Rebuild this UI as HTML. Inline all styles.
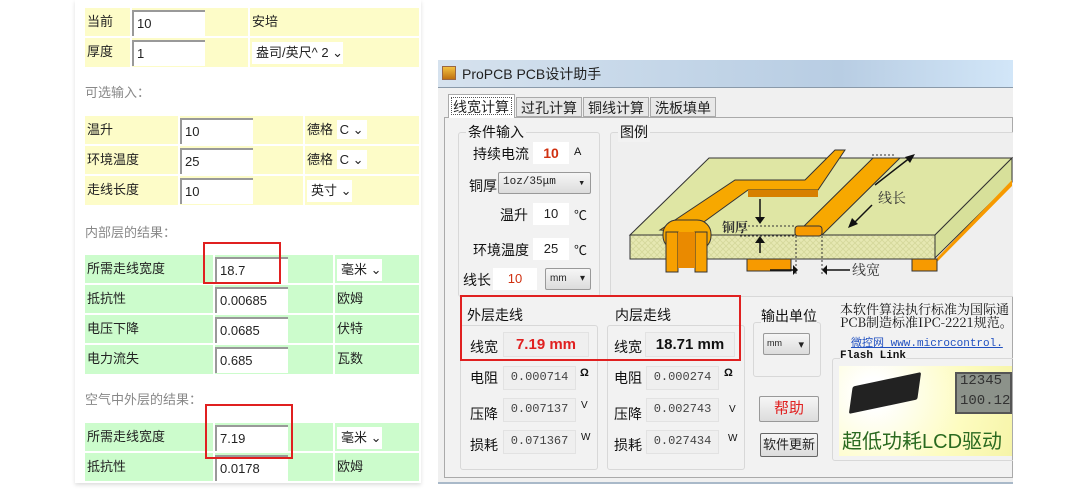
<!DOCTYPE html>
<html><head><meta charset="utf-8">
<style>
*{margin:0;padding:0;box-sizing:border-box}
body{width:1080px;height:501px;background:#fff;position:relative;overflow:hidden;font-family:"Liberation Sans","Noto Sans CJK SC",sans-serif;font-size:13px;color:#222}
.a{position:absolute}
.y{background:#fdfcc8}
.g{background:#ccfccc}
.cell{position:absolute;line-height:28px;padding-left:2px;font-size:13px}
.inp{position:absolute;background:#fff;border-top:2px solid #999;border-left:2px solid #999;padding-left:3px;line-height:24px;font-size:13px}
.sel{position:absolute;background:#fff;padding-left:4px;line-height:22px;font-size:13px}
.lbl{position:absolute;color:#888;font-size:13px}
.red{position:absolute;border:2px solid #e02020}
.w{position:absolute;font-size:13px;color:#111;white-space:nowrap}
.box{position:absolute;background:#efefef;border:1px solid #e2e2e2}
.mono{font-family:"Liberation Mono","Noto Sans CJK SC",monospace;font-size:12px;color:#444}
.btn{position:absolute;border:1px solid #999;background:linear-gradient(#f6f6f6,#dcdcdc);border-radius:2px;text-align:center;white-space:nowrap}
.grp{position:absolute;border:1px solid #d8d8d8;border-radius:3px}
</style></head><body>
<!-- left panel -->
<div class="a" style="left:75px;top:0;width:346px;height:483px;background:#fff;box-shadow:0 2px 4px #ddd"></div>
<div class="a y" style="left:85px;top:8px;width:334px;height:59px"></div>
<div class="a" style="left:85px;top:36px;width:334px;height:2px;background:#fff"></div>
<div class="a" style="left:130px;top:8px;width:2px;height:59px;background:#fff"></div>
<div class="a" style="left:248px;top:8px;width:2px;height:59px;background:#fff"></div>
<div class="cell" style="left:85px;top:8px">当前</div>
<div class="cell" style="left:85px;top:38px">厚度</div>
<div class="inp" style="left:132px;top:10px;width:73px">10</div>
<div class="inp" style="left:132px;top:40px;width:73px">1</div>
<div class="cell" style="left:250px;top:8px">安培</div>
<div class="sel" style="left:252px;top:42px">盎司/英尺^ 2 ⌄</div>
<div class="lbl" style="left:85px;top:82px">可选输入：</div>

<div class="a y" style="left:85px;top:116px;width:334px;height:89px"></div>
<div class="a" style="left:85px;top:144px;width:334px;height:2px;background:#fff"></div>
<div class="a" style="left:85px;top:174px;width:334px;height:2px;background:#fff"></div>
<div class="a" style="left:178px;top:116px;width:2px;height:89px;background:#fff"></div>
<div class="a" style="left:303px;top:116px;width:2px;height:89px;background:#fff"></div>
<div class="cell" style="left:85px;top:116px">温升</div>
<div class="cell" style="left:85px;top:146px">环境温度</div>
<div class="cell" style="left:85px;top:176px">走线长度</div>
<div class="inp" style="left:180px;top:118px;width:73px">10</div>
<div class="inp" style="left:180px;top:148px;width:73px">25</div>
<div class="inp" style="left:180px;top:178px;width:73px">10</div>
<div class="cell" style="left:305px;top:116px">德格 <span style="background:#fff;padding:2px 3px">C ⌄</span></div>
<div class="cell" style="left:305px;top:146px">德格 <span style="background:#fff;padding:2px 3px">C ⌄</span></div>
<div class="sel" style="left:307px;top:180px">英寸 ⌄</div>
<div class="lbl" style="left:85px;top:222px">内部层的结果：</div>

<div class="a g" style="left:85px;top:255px;width:334px;height:119px"></div>
<div class="a" style="left:85px;top:283px;width:334px;height:2px;background:#fff"></div>
<div class="a" style="left:85px;top:313px;width:334px;height:2px;background:#fff"></div>
<div class="a" style="left:85px;top:343px;width:334px;height:2px;background:#fff"></div>
<div class="a" style="left:213px;top:255px;width:2px;height:119px;background:#fff"></div>
<div class="a" style="left:333px;top:255px;width:2px;height:119px;background:#fff"></div>
<div class="cell" style="left:85px;top:255px">所需走线宽度</div>
<div class="cell" style="left:85px;top:285px">抵抗性</div>
<div class="cell" style="left:85px;top:315px">电压下降</div>
<div class="cell" style="left:85px;top:345px">电力流失</div>
<div class="inp" style="left:215px;top:257px;width:73px">18.7</div>
<div class="inp" style="left:215px;top:287px;width:73px">0.00685</div>
<div class="inp" style="left:215px;top:317px;width:73px">0.0685</div>
<div class="inp" style="left:215px;top:347px;width:73px">0.685</div>
<div class="sel" style="left:337px;top:259px">毫米 ⌄</div>
<div class="cell" style="left:335px;top:285px">欧姆</div>
<div class="cell" style="left:335px;top:315px">伏特</div>
<div class="cell" style="left:335px;top:345px">瓦数</div>
<div class="red" style="left:203px;top:242px;width:78px;height:42px"></div>
<div class="lbl" style="left:85px;top:389px">空气中外层的结果：</div>

<div class="a g" style="left:85px;top:423px;width:334px;height:58px"></div>
<div class="a" style="left:85px;top:451px;width:334px;height:2px;background:#fff"></div>
<div class="a" style="left:213px;top:423px;width:2px;height:58px;background:#fff"></div>
<div class="a" style="left:333px;top:423px;width:2px;height:58px;background:#fff"></div>
<div class="cell" style="left:85px;top:423px">所需走线宽度</div>
<div class="cell" style="left:85px;top:453px">抵抗性</div>
<div class="inp" style="left:215px;top:425px;width:73px">7.19</div>
<div class="inp" style="left:215px;top:455px;width:73px">0.0178</div>
<div class="sel" style="left:337px;top:427px">毫米 ⌄</div>
<div class="cell" style="left:335px;top:453px">欧姆</div>
<div class="red" style="left:205px;top:404px;width:88px;height:55px"></div>

<!-- window -->
<div class="a" style="left:438px;top:60px;width:575px;height:424px;background:#f0f0f0;border-bottom:2px solid #a9b9c9"></div>
<div class="a" style="left:438px;top:60px;width:575px;height:28px;background:linear-gradient(90deg,#d6e2ee,#c4d6e8 40%,#b8cde3 70%,#d2e6f8);border-bottom:1px solid #8a9aaa"></div>
<div class="a" style="left:442px;top:66px;width:14px;height:14px;background:linear-gradient(#f2c040,#c07010);border:1px solid #964"></div>
<div class="w" style="left:462px;top:64px;font-size:14px;color:#222">ProPCB PCB设计助手</div>
<div class="a" style="left:444px;top:117px;width:569px;height:361px;border:1px solid #aaa;background:#f2f2f2"></div>
<div class="a" style="left:448px;top:94px;width:67px;height:24px;background:#fff;border:1px solid #aaa;border-bottom:none;font-size:14px;padding:2px 4px;outline:1px dotted #555;outline-offset:-4px">线宽计算</div>
<div class="a" style="left:516px;top:97px;width:66px;height:20px;background:#e8e8e8;border:1px solid #aaa;font-size:14px;padding:0 4px">过孔计算</div>
<div class="a" style="left:583px;top:97px;width:66px;height:20px;background:#e8e8e8;border:1px solid #aaa;font-size:14px;padding:0 4px">铜线计算</div>
<div class="a" style="left:650px;top:97px;width:66px;height:20px;background:#e8e8e8;border:1px solid #aaa;font-size:14px;padding:0 4px">洗板填单</div>

<div class="grp" style="left:458px;top:132px;width:142px;height:165px"></div>
<div class="w" style="left:466px;top:122px;background:#f2f2f2;padding:0 2px;font-size:14px">条件输入</div>
<div class="grp" style="left:610px;top:132px;width:410px;height:165px;background:#efefef"></div>
<div class="w" style="left:618px;top:122px;background:#f2f2f2;padding:0 2px;font-size:14px">图例</div>
<div class="w" style="left:473px;top:144px;font-size:14px">持续电流</div>
<div class="a" style="left:533px;top:142px;width:36px;height:22px;background:#fff;color:#d03010;font-weight:bold;font-size:14px;text-align:center;line-height:22px">10</div>
<div class="w" style="left:574px;top:146px;font-size:11px">A</div>
<div class="w" style="left:469px;top:176px;font-size:14px">铜厚</div>
<div class="btn" style="left:498px;top:172px;width:93px;height:22px;font-size:11px;text-align:left;padding:3px 0 0 4px;font-family:'Liberation Mono',monospace">1oz/35μm <span style="position:absolute;right:5px">▾</span></div>
<div class="w" style="left:500px;top:205px;font-size:14px">温升</div>
<div class="a" style="left:533px;top:203px;width:36px;height:22px;background:#fff;font-size:13px;text-align:center;line-height:22px">10</div>
<div class="w" style="left:574px;top:205px;font-size:13px">℃</div>
<div class="w" style="left:473px;top:240px;font-size:14px">环境温度</div>
<div class="a" style="left:533px;top:238px;width:36px;height:22px;background:#fff;font-size:13px;text-align:center;line-height:22px">25</div>
<div class="w" style="left:574px;top:240px;font-size:13px">℃</div>
<div class="w" style="left:463px;top:270px;font-size:14px">线长</div>
<div class="a" style="left:493px;top:268px;width:44px;height:22px;background:#fff;color:#d03010;font-size:13px;text-align:center;line-height:22px">10</div>
<div class="btn" style="left:545px;top:268px;width:46px;height:22px;font-size:10px;text-align:left;padding:4px 0 0 4px">mm <span style="position:absolute;right:5px">▾</span></div>

<svg class="a" style="left:610px;top:135px" width="403" height="150" viewBox="610 135 403 150">
<defs><pattern id="hp" width="6" height="6" patternUnits="userSpaceOnUse"><rect width="6" height="6" fill="#e6e8b2"/><path d="M0 0L6 6M6 0L0 6" stroke="#d4d79a" stroke-width="0.8"/></pattern></defs>
<polygon points="630,235 709,158 1012,158 935,235" fill="#dfe6a4" stroke="#333" stroke-width="1"/>
<polygon points="935,235 1012,158 1012,182 935,258" fill="#d7e09a" stroke="#333"/>
<polygon points="937,262 1012,186 1012,180 937,258" fill="#f79a00"/>
<rect x="630" y="235" width="305" height="24" fill="url(#hp)" stroke="#333"/>
<path d="M660,230 L735,180 L805,180 L835,150 L845,150 L818,190 L748,190 L690,232 Z" fill="#f7a800" stroke="#333"/>
<path d="M748,190 L818,190 L818,197 L748,197 Z" fill="#d78000"/>
<rect x="663" y="220" width="48" height="30" rx="14" fill="#f7a800" stroke="#333"/>
<rect x="666" y="232" width="12" height="40" fill="#f7a000" stroke="#333"/>
<rect x="695" y="232" width="12" height="40" fill="#f7a000" stroke="#333"/>
<rect x="678" y="232" width="17" height="36" fill="#ea8a00"/>
<path d="M795,235 L873,158 L900,158 L822,235 Z" fill="#f7a800" stroke="#333"/>
<rect x="795" y="226" width="27" height="10" rx="3" fill="#f79a00" stroke="#333"/>
<rect x="747" y="259" width="44" height="12" fill="#f79a00" stroke="#333"/>
<rect x="912" y="259" width="25" height="12" fill="#f79a00" stroke="#333"/>
<path d="M760,199 V222 M760,253 V238" stroke="#111" stroke-width="1.5"/>
<polygon points="755,217 765,217 760,224" fill="#111"/><polygon points="755,243 765,243 760,236" fill="#111"/>
<path d="M740,226 H795 M740,236 H795 M796,236 V275 M822,236 V275 M872,155 H895" stroke="#333" stroke-dasharray="2,2"/>
<text x="722" y="232" font-size="13" font-weight="bold" fill="#333" font-family="Noto Serif CJK SC,serif">铜厚</text>
<path d="M770,270 H793 M850,270 H827" stroke="#111" stroke-width="1.5"/>
<polygon points="793,265 793,275 798,270" fill="#111"/><polygon points="827,265 827,275 822,270" fill="#111"/>
<text x="852" y="275" font-size="14" fill="#333" font-family="Noto Serif CJK SC,serif">线宽</text>
<text x="878" y="203" font-size="14" fill="#333" font-family="Noto Serif CJK SC,serif">线长</text>
<path d="M875,185 L911,157 M872,205 L853,224" stroke="#111" stroke-width="1.5"/>
<polygon points="915,154 905,157 910,163" fill="#111"/><polygon points="848,228 852,218 858,224" fill="#111"/>
</svg>

<div class="grp" style="left:460px;top:325px;width:138px;height:145px"></div>
<div class="grp" style="left:607px;top:325px;width:138px;height:145px"></div>
<div class="w" style="left:467px;top:305px;font-size:14px">外层走线</div>
<div class="w" style="left:615px;top:305px;font-size:14px">内层走线</div>
<div class="w" style="left:470px;top:337px;font-size:14px">线宽</div>
<div class="box" style="left:503px;top:332px;width:86px;height:25px;color:#e02020;font-weight:bold;font-size:15px;line-height:24px;text-align:center">7.19 mm</div>
<div class="w" style="left:614px;top:337px;font-size:14px">线宽</div>
<div class="box" style="left:645px;top:332px;width:90px;height:25px;color:#111;font-weight:bold;font-size:15px;line-height:24px;text-align:center">18.71 mm</div>
<div class="red" style="left:460px;top:295px;width:281px;height:66px"></div>
<div class="w" style="left:470px;top:368px;font-size:14px">电阻</div>
<div class="box mono" style="left:503px;top:366px;width:73px;height:24px;line-height:20px;text-align:center">0.000714</div>
<div class="w" style="left:580px;top:367px;font-size:11px;font-weight:bold">Ω</div>
<div class="w" style="left:614px;top:368px;font-size:14px">电阻</div>
<div class="box mono" style="left:646px;top:366px;width:73px;height:24px;line-height:20px;text-align:center">0.000274</div>
<div class="w" style="left:724px;top:367px;font-size:11px;font-weight:bold">Ω</div>
<div class="w" style="left:470px;top:404px;font-size:14px">压降</div>
<div class="box mono" style="left:503px;top:398px;width:73px;height:24px;line-height:20px;text-align:center">0.007137</div>
<div class="w" style="left:581px;top:400px;font-size:10px">V</div>
<div class="w" style="left:614px;top:404px;font-size:14px">压降</div>
<div class="box mono" style="left:646px;top:398px;width:73px;height:24px;line-height:20px;text-align:center">0.002743</div>
<div class="w" style="left:729px;top:404px;font-size:10px">V</div>
<div class="w" style="left:470px;top:435px;font-size:14px">损耗</div>
<div class="box mono" style="left:503px;top:430px;width:73px;height:24px;line-height:20px;text-align:center">0.071367</div>
<div class="w" style="left:581px;top:432px;font-size:10px">W</div>
<div class="w" style="left:614px;top:435px;font-size:14px">损耗</div>
<div class="box mono" style="left:646px;top:430px;width:73px;height:24px;line-height:20px;text-align:center">0.027434</div>
<div class="w" style="left:728px;top:433px;font-size:10px">W</div>

<div class="grp" style="left:753px;top:322px;width:68px;height:55px"></div>
<div class="w" style="left:761px;top:306px;font-size:14px;background:#f2f2f2">输出单位</div>
<div class="btn" style="left:763px;top:333px;width:47px;height:22px;font-size:9px;text-align:left;padding:4px 0 0 3px">mm <span style="position:absolute;right:5px;font-size:11px">▾</span></div>
<div class="btn" style="left:759px;top:396px;width:60px;height:26px;color:#e02020;font-size:15px;line-height:24px">帮助</div>
<div class="btn" style="left:760px;top:433px;width:58px;height:24px;font-size:13px;line-height:22px;border-color:#666;padding:0">软件更新</div>

<div class="w" style="left:840px;top:302px;font-size:13px;line-height:13px;font-family:'Noto Serif CJK SC',serif">本软件算法执行标准为国际通<br>PCB制造标准IPC-2221规范。</div>
<div class="w" style="left:851px;top:334px;font-size:11px;color:#2050c0;text-decoration:underline;font-family:'Liberation Mono','Noto Sans CJK SC',monospace">微控网 www.microcontrol.</div>
<div class="grp" style="left:832px;top:358px;width:185px;height:103px"></div>
<div class="w" style="left:840px;top:350px;font-size:11px;font-weight:bold;font-family:'Liberation Mono',monospace;background:#f2f2f2">Flash Link</div>
<div class="a" style="left:839px;top:366px;width:173px;height:90px;background:radial-gradient(circle at 20% 30%,#fff 10%,#fdfcc0 60%,#f6f4a8)"></div>
<div class="a" style="left:850px;top:380px;width:70px;height:26px;background:#222;transform:rotate(-12deg) skewX(-20deg);border-radius:2px"></div>
<div class="a" style="left:955px;top:372px;width:57px;height:42px;background:#8c928a;border:2px solid #555"></div>
<div class="w" style="left:960px;top:373px;font-size:14px;color:#333;font-family:'Liberation Mono',monospace">12345</div>
<div class="w" style="left:960px;top:393px;font-size:14px;color:#333;font-family:'Liberation Mono',monospace">100.12</div>
<div class="w" style="left:842px;top:425px;font-size:20px;color:#2a6a20">超低功耗LCD驱动</div>
<!-- right clip -->
<div class="a" style="left:1013px;top:0;width:67px;height:501px;background:#fff"></div>
</body></html>
